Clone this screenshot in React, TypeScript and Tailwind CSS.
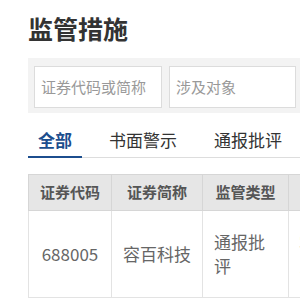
const tabs = ["全部", "书面警示", "通报批评"];

export default function App() {
  return (
    <div className="w-[300px] h-[300px] overflow-hidden bg-white pl-[28px] pt-[16px] font-['Microsoft_YaHei','Noto_Sans_CJK_SC',sans-serif]">
      <h1 className="text-[25px] leading-[25px] font-bold text-[#333]">监管措施</h1>

      <div className="mt-[17px] w-[320px] h-[55px] bg-[#f3f3f3] pl-[6px] pt-[8px] flex gap-[7px]">
        <div className="w-[128px] h-[42px] bg-white border border-[#dcdcdc] flex items-center pl-[6px] text-[15px] text-[#999]">
          证券代码或简称
        </div>
        <div className="w-[127px] h-[42px] bg-white border border-[#dcdcdc] flex items-center pl-[6px] text-[15px] text-[#999]">
          涉及对象
        </div>
      </div>

      <div className="mt-[15px] w-[320px] flex gap-[17px] border-b border-[#dddddd]">
        {tabs.map((t, i) => (
          <div
            key={t}
            className={
              i === 0
                ? "px-[10px] pb-[4px] leading-[24px] text-[17px] font-bold text-[#1c4e8e] border-b-2 border-[#1c4e8e] -mb-px"
                : "px-[10px] pb-[4px] leading-[24px] text-[17px] text-[#333] border-b-2 border-transparent -mb-px"
            }
          >
            {t}
          </div>
        ))}
      </div>

      <table className="mt-[16px] border-collapse table-fixed w-[460px]">
        <colgroup>
          <col className="w-[83px]" />
          <col className="w-[91px]" />
          <col className="w-[86px]" />
          <col className="w-[200px]" />
        </colgroup>
        <thead>
          <tr className="h-[36px] bg-[#e6e6e6]">
            <th className="border border-[#d6d6d6] text-[15px] font-bold text-[#555]">证券代码</th>
            <th className="border border-[#d6d6d6] text-[15px] font-bold text-[#555]">证券简称</th>
            <th className="border border-[#d6d6d6] text-[15px] font-bold text-[#555]">监管类型</th>
            <th className="border border-[#d6d6d6] text-[15px] font-bold text-[#555]">涉及对象</th>
          </tr>
        </thead>
        <tbody>
          <tr className="h-[87px]">
            <td className="border border-[#e3e3e3] text-center text-[17px] text-[#666]">688005</td>
            <td className="border border-[#e3e3e3] text-center text-[17px] text-[#666]">容百科技</td>
            <td className="border border-[#e3e3e3] px-[11px] text-left text-[17px] leading-[24px] text-[#666]">通报批评</td>
            <td className="border border-[#e3e3e3] px-[10px] text-left text-[17px] leading-[22px] text-[#888]">
              容百科技及相关责任人员予以通报批评
            </td>
          </tr>
        </tbody>
      </table>
    </div>
  );
}
